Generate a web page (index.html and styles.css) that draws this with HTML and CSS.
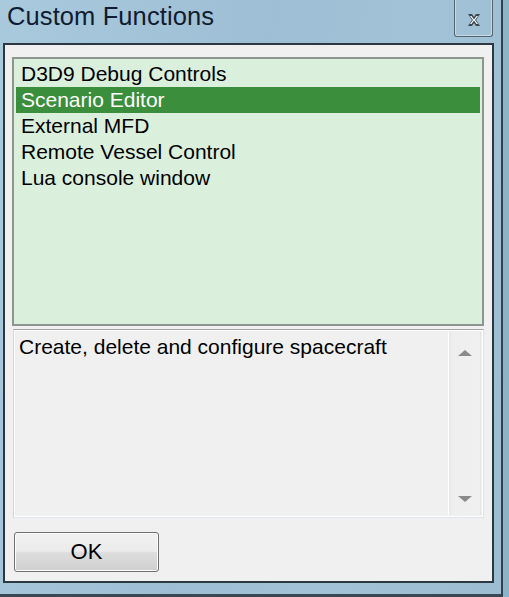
FILE: index.html
```html
<!DOCTYPE html>
<html>
<head>
<meta charset="utf-8">
<link rel="stylesheet" href="styles.css">
</head>
<body>
<div class="window">
  <div class="titlebar">
    <span class="title">Custom Functions</span>
    <div class="close">
      <svg width="14" height="12" viewBox="0 0 14 12">
        <path d="M1 0 H5 L7 3 L9 0 H13 L9 6 L13 12 H9 L7 9 L5 12 H1 L5 6 Z" fill="#3c4650"/>
        <path d="M3 2 H4.5 L7 5.5 L9.5 2 H11 L8 6 L11 10 H9.5 L7 6.5 L4.5 10 H3 L6 6 Z" fill="#ffffff"/>
      </svg>
    </div>
  </div>
  <div class="client">
    <ul class="list">
      <li>D3D9 Debug Controls</li>
      <li class="selected">Scenario Editor</li>
      <li>External MFD</li>
      <li>Remote Vessel Control</li>
      <li>Lua console window</li>
    </ul>
    <div class="desc">
      <p class="desc-text">Create, delete and configure spacecraft</p>
      <div class="scrollbar">
        <span class="arrow up"></span>
        <span class="arrow down"></span>
      </div>
    </div>
    <div class="ok">OK</div>
  </div>
</div>
</body>
</html>
```

FILE: styles.css
```css
html, body {
  margin: 0;
  padding: 0;
}
body {
  width: 509px;
  height: 597px;
  overflow: hidden;
  font-family: "Liberation Sans", Arial, sans-serif;
}
.window {
  width: 509px;
  height: 597px;
  box-sizing: border-box;
  background: linear-gradient(100deg, #a9c9dd 0%, #9dbed4 45%, #a2c2d7 70%, #9cbcd2 100%);
  box-shadow: inset -6px 0 0 #8db3cb, inset -8px 0 0 #33414c, inset 0 -3px 0 #3a4853;
  display: flex;
  flex-direction: column;
}
.titlebar {
  height: 43px;
  flex: none;
  display: flex;
  justify-content: space-between;
  align-items: flex-start;
  padding-left: 7px;
  padding-right: 16px;
  box-sizing: border-box;
}
.title {
  font-size: 25.5px;
  line-height: 32px;
  color: #101c30;
  letter-spacing: 0.1px;
}
.close {
  width: 39px;
  height: 37px;
  box-sizing: border-box;
  border: 1px solid #56636d;
  border-top: none;
  border-radius: 0 0 3px 3px;
  box-shadow: inset 1px 0 0 #c5dae8, inset -1px -1px 0 #c5dae8;
  display: flex;
  justify-content: center;
  padding-top: 14px;
}
.client {
  width: 491px;
  height: 540px;
  margin-left: 3px;
  box-sizing: border-box;
  border: 2px solid #2c3841;
  background: #f0f0f0;
  padding: 12px 8px 0 7px;
}
.list {
  list-style: none;
  margin: 0;
  height: 269px;
  box-sizing: border-box;
  border: 2px solid #8d968e;
  background: #dbf0dc;
  padding: 2px 2px 0 2px;
  font-size: 21px;
  color: #000;
}
.list li {
  height: 26px;
  line-height: 26px;
  padding-left: 5px;
  white-space: nowrap;
}
.list li.selected {
  background: #3a8e3c;
  color: #ffffff;
}
.desc {
  margin: 3px 0 0 1px;
  height: 189px;
  box-sizing: border-box;
  border-top: 1px solid #a4a4a4;
  border-left: 1px solid #d6d6d6;
  border-right: 1px solid #dde3ea;
  border-bottom: 1px solid #dde3ea;
  box-shadow: inset 1px 1px 0 #ffffff, inset -1px -1px 0 #ffffff;
  background: #f0f0f0;
  display: flex;
  justify-content: space-between;
  padding: 2px 2px 2px 5px;
}
.desc-text {
  margin: 0;
  font-size: 21px;
  line-height: 30px;
  color: #000;
}
.scrollbar {
  width: 33px;
  box-sizing: border-box;
  border-left: 1px solid #ffffff;
  background: linear-gradient(90deg, #e6e6e6 0px, #eeeeee 3px, #f0f0f0 100%);
  border-right: 1px solid #e4e4e4;
  display: flex;
  flex-direction: column;
  justify-content: space-between;
  align-items: center;
  padding: 18px 0 13px 0;
}
.arrow {
  width: 0;
  height: 0;
  border-left: 7px solid transparent;
  border-right: 7px solid transparent;
}
.arrow.up {
  border-bottom: 6px solid #8a8a8a;
}
.arrow.down {
  border-top: 6px solid #8a8a8a;
}
.ok {
  margin: 14px 0 0 2px;
  width: 145px;
  height: 40px;
  box-sizing: border-box;
  border: 1px solid #707070;
  border-radius: 3px;
  box-shadow: inset 0 0 0 1px #fcfcfc;
  background: linear-gradient(180deg, #f2f2f2 0%, #ebebeb 48%, #dddddd 52%, #cfcfcf 100%);
  display: flex;
  align-items: center;
  justify-content: center;
  font-size: 22px;
  color: #000;
}
```
